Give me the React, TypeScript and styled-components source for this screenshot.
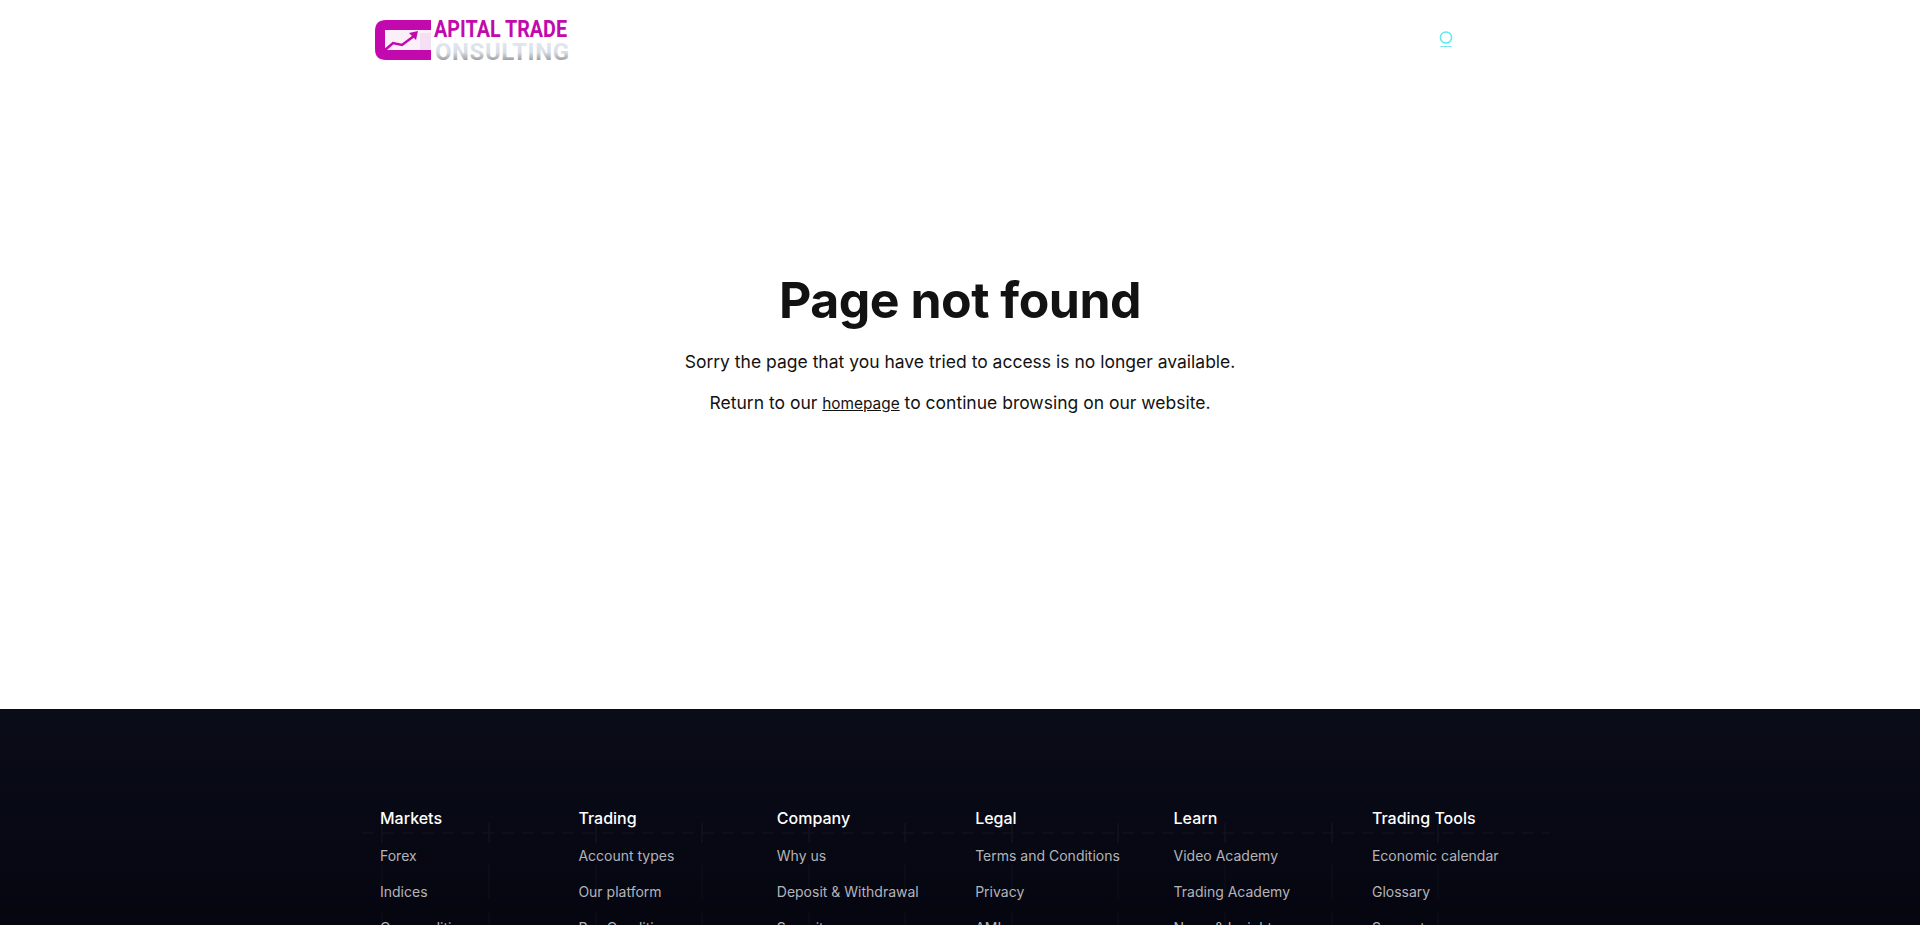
import React from 'react'
import styled, { createGlobalStyle } from 'styled-components'

const GlobalStyle = createGlobalStyle`
  html, body {
    margin: 0;
    padding: 0;
    background: #ffffff;
    font-family: Inter, "Liberation Sans", sans-serif;
    color: #121212;
  }
`

const Page = styled.div`
  height: 925px;
  overflow: hidden;
  display: flex;
  flex-direction: column;
`

const Header = styled.header`
  height: 80px;
  flex: none;
  width: 1200px;
  margin: 0 auto;
  box-sizing: border-box;
  padding-left: 13px;
  display: flex;
  align-items: center;
  justify-content: space-between;
`

const Logo = styled.a`
  display: flex;
  align-items: center;
`

const LoaderWrap = styled.div`
  margin-right: 107px;
  display: flex;
`

const Main = styled.main`
  height: 629px;
  flex: none;
  display: flex;
  flex-direction: column;
  align-items: center;
`

const Title = styled.h1`
  margin: 190px 0 0;
  font-size: 50px;
  line-height: 60px;
  font-weight: 700;
  letter-spacing: -0.5px;
  color: #121212;
`

const Message = styled.p`
  margin: 0;
  font-size: 17.5px;
  line-height: 30px;
  color: #121212;
  &:first-of-type {
    margin-top: 17px;
  }
  & + & {
    margin-top: 11px;
  }
`

const HomeLink = styled.a`
  font-size: 15.4px;
  color: #121212;
  text-decoration: underline;
`

const Footer = styled.footer`
  flex: 1;
  position: relative;
  background: linear-gradient(180deg, #0a0c18 0%, #04050f 100%);
  padding-top: 97px;
`

const GridLines = styled.svg`
  position: absolute;
  top: 0;
  left: 0;
  width: 100%;
  height: 100%;
`

const Columns = styled.div`
  position: relative;
  width: 1200px;
  margin: 0 auto;
  box-sizing: border-box;
  padding-left: 20px;
  display: grid;
  grid-template-columns: repeat(6, 198.4px);
`

const Column = styled.div`
  display: flex;
  flex-direction: column;
`

const ColumnTitle = styled.h4`
  margin: 0 0 15px;
  font-size: 16px;
  line-height: 24px;
  font-weight: 500;
  color: #ffffff;
`

const ColumnLink = styled.a`
  font-size: 14px;
  line-height: 22px;
  margin-bottom: 14px;
  color: #b4b4b8;
  text-decoration: none;
`

const columns = [
  { title: 'Markets', links: ['Forex', 'Indices', 'Commodities'] },
  { title: 'Trading', links: ['Account types', 'Our platform', 'Pay Conditions'] },
  { title: 'Company', links: ['Why us', 'Deposit & Withdrawal', 'Security'] },
  { title: 'Legal', links: ['Terms and Conditions', 'Privacy', 'AML'] },
  { title: 'Learn', links: ['Video Academy', 'Trading Academy', 'News & Insights'] },
  { title: 'Trading Tools', links: ['Economic calendar', 'Glossary', 'Support'] },
]

// vertical rules of the faint chart behind the footer columns
const gridXs = [382, 489, 596, 702, 809, 905, 1012, 1118, 1225, 1332, 1438]

const LogoMark = () => (
  <svg width="198" height="44" viewBox="0 0 198 44">
    <defs>
      <linearGradient id="silver" gradientUnits="userSpaceOnUse" x1="0" y1="25" x2="0" y2="42">
        <stop offset="0" stopColor="#e2e6ee" />
        <stop offset="0.55" stopColor="#d9dde6" />
        <stop offset="1" stopColor="#a0a0a4" />
      </linearGradient>
    </defs>
    <rect x="12" y="12" width="46" height="20" fill="#fbeffa" />
    <rect x="47" y="15" width="11" height="17" fill="#f5dff2" />
    <path d="M58 2H13Q2 2 2 13V31Q2 42 13 42H58V32H12V12H58Z" fill="#c209ad" />
    <path d="M12 32L20 25L29 27L41 18" fill="none" stroke="#c209ad" strokeWidth="2.5" />
    <path d="M36 15L45 13L43 22Z" fill="#c209ad" />
    <text
      x="61"
      y="19"
      fontFamily="Roboto, sans-serif"
      fontWeight="700"
      fontSize="24"
      fill="#c209ad"
      textLength="133"
      lengthAdjust="spacingAndGlyphs"
    >
      APITAL TRADE
    </text>
    <text
      x="62"
      y="42"
      fontFamily="Roboto, sans-serif"
      fontWeight="700"
      fontSize="24"
      fill="url(#silver)"
      textLength="134"
      lengthAdjust="spacing"
    >
      ONSULTING
    </text>
  </svg>
)

const LoaderIcon = () => (
  <svg width="14" height="18" viewBox="0 0 14 18">
    <circle cx="7" cy="6.500" r="5.600" fill="none" stroke="#5ee9f2" strokeWidth="1.500" />
    <rect x="1.500" y="15" width="11" height="1" fill="#6fe6ee" />
  </svg>
)

const App: React.FC = () => (
  <Page>
    <GlobalStyle />
    <Header>
      <Logo>
        <LogoMark />
      </Logo>
      <LoaderWrap>
        <LoaderIcon />
      </LoaderWrap>
    </Header>
    <Main>
      <Title>Page not found</Title>
      <Message>Sorry the page that you have tried to access is no longer available.</Message>
      <Message>
        Return to our <HomeLink href="#">homepage</HomeLink> to continue browsing on our website.
      </Message>
    </Main>
    <Footer>
      <GridLines>
        <line x1="362" y1="124" x2="1550" y2="124" stroke="#15161e" strokeDasharray="12 8" />
        {gridXs.map((x) => (
          <g key={x}>
            <line x1={x} y1="155" x2={x} y2="216" stroke="#10111a" strokeDasharray="34 14" />
            <line x1={x} y1="114" x2={x} y2="134" stroke="#171821" />
          </g>
        ))}
      </GridLines>
      <Columns>
        {columns.map((column) => (
          <Column key={column.title}>
            <ColumnTitle>{column.title}</ColumnTitle>
            {column.links.map((link) => (
              <ColumnLink key={link} href="#">
                {link}
              </ColumnLink>
            ))}
          </Column>
        ))}
      </Columns>
    </Footer>
  </Page>
)

export default App
